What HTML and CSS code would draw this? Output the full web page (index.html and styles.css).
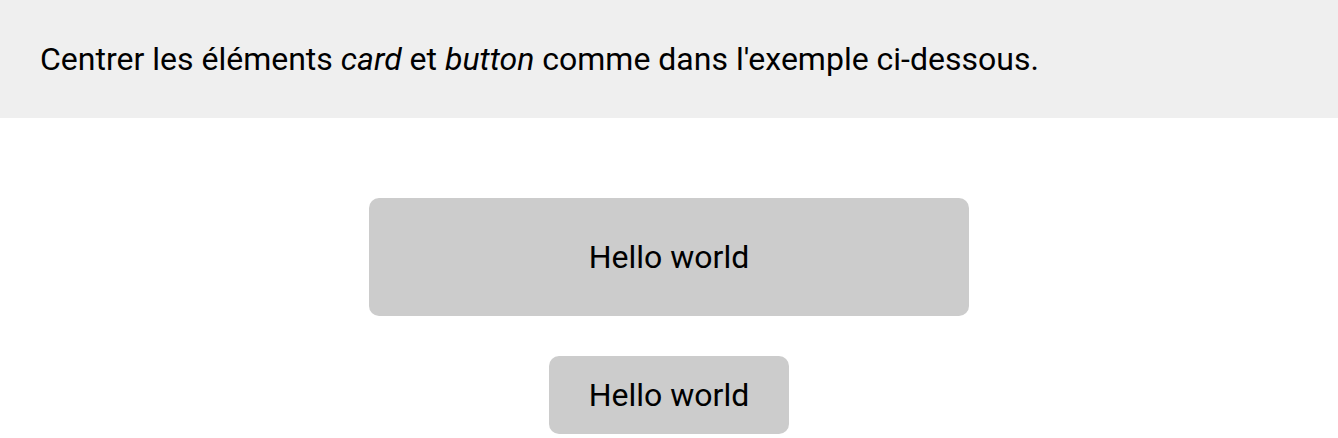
FILE: index.html
```html
<!DOCTYPE html>
<html lang="fr">
<head>
<meta charset="utf-8">
<title>Centrer</title>
<link rel="stylesheet" href="styles.css">
</head>
<body>
<header class="instructions">
  <p>Centrer les éléments <em>card</em> et <em>button</em> comme dans l'exemple ci-dessous.</p>
</header>
<main class="demo">
  <div class="card">Hello world</div>
  <div class="button">Hello world</div>
</main>
</body>
</html>
```
FILE: styles.css
```css
html, body {
  margin: 0;
  padding: 0;
  background: #ffffff;
  font-family: Roboto, "Liberation Sans", sans-serif;
  font-size: 32px;
  color: #000000;
}

.instructions {
  background: #efefef;
  padding: 40px;
}

.instructions p {
  margin: 0;
}

.demo {
  display: flex;
  flex-direction: column;
  align-items: center;
  gap: 40px;
  padding-top: 80px;
}

.card {
  width: 600px;
  box-sizing: border-box;
  padding: 40px;
  text-align: center;
  background: #cccccc;
  border-radius: 10px;
}

.button {
  padding: 20px 40px;
  background: #cccccc;
  border-radius: 10px;
}
```
